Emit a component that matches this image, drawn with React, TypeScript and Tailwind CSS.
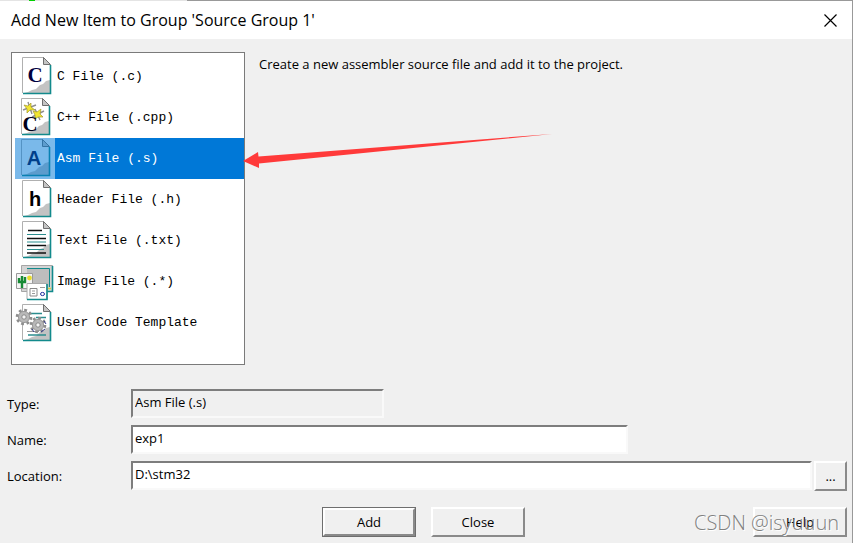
import React, { FC, ReactNode, useState } from 'react'

type PageProps = {
  children?: ReactNode
}

type FileType = {
  label: string
  icon: ReactNode
}

// Sheet of paper with a folded corner, shared by most of the file icons
const Page: FC<PageProps> = ({ children }) => (
  <g>
    <path d="M7.5 1.5H29L35.5 9V37.5H7.5Z" fill="#fff" />
    <path d="M35 24L31 25L28 28L25 29L21 33L17 34L13 36L9 37H35Z" fill="#c3c3c3" />
    <path d="M7.5 37V1.5H29" fill="none" stroke="#b0b0b0" />
    <path d="M28.5 1.5V8.5H35.5Z" fill="#c4c4c4" stroke="#6f6f6f" />
    <path d="M35.5 9V37.5H8" fill="none" stroke="#128a8c" strokeWidth="1.6" />
    {children}
  </g>
)

// Toothed wheel of the template icon
const Gear: FC<{ x: number; y: number }> = ({ x, y }) => (
  <g transform={`translate(${x} ${y})`}>
    <circle r="6.8" fill="none" stroke="#8d8d8d" strokeWidth="3" strokeDasharray="2.7 2.64" />
    <circle r="5.6" fill="#b8b8b8" stroke="#999" />
    <circle r="2.2" fill="#f4f4f4" stroke="#8a8a8a" />
  </g>
)

const fileTypes: FileType[] = [
  {
    label: 'C File (.c)',
    icon: (
      <Page>
        <text x="20" y="26" textAnchor="middle" className="font-['Liberation_Serif',serif] text-[21px] font-bold" fill="#000040">
          C
        </text>
      </Page>
    )
  },
  {
    label: 'C++ File (.cpp)',
    icon: (
      <g>
        <g transform="translate(-1 0)">
          <Page />
        </g>
        <path d="M13 5L17 17M8 13L21 8M20 12L25 23M17 20L29 14" stroke="#8f8f8f" strokeWidth="1.4" />
        <path d="M9 8L13 9L16 6L16 10L20 13L15 13L12 16L12 12Z" fill="#f2e530" stroke="#a39a2c" strokeWidth="0.7" />
        <path d="M18 14L22 15L26 12L25 17L28 20L23 20L20 22L20 18Z" fill="#f2e530" stroke="#a39a2c" strokeWidth="0.7" />
        <text x="15" y="34" textAnchor="middle" className="font-['Liberation_Serif',serif] text-[21px] font-bold" fill="#000018">
          C
        </text>
      </g>
    )
  },
  {
    label: 'Asm File (.s)',
    icon: (
      <g>
        <g transform="translate(-1 0)">
          <Page />
        </g>
        <text x="19" y="27" textAnchor="middle" className="font-['Liberation_Sans',sans-serif] text-[20px] font-bold" fill="#000038">
          A
        </text>
      </g>
    )
  },
  {
    label: 'Header File (.h)',
    icon: (
      <Page>
        <text x="20" y="27" textAnchor="middle" className="font-['Liberation_Sans',sans-serif] text-[20px] font-bold" fill="#000">
          h
        </text>
      </Page>
    )
  },
  {
    label: 'Text File (.txt)',
    icon: (
      <Page>
        <path d="M13 10.5H27M12 18.5H31M12 25.5H31M12 33H31" stroke="#111" strokeWidth="1.3" />
        <path d="M12 14.5H31M12 22H31M12 29.5H29" stroke="#2b8d8e" strokeWidth="1.2" />
      </Page>
    )
  },
  {
    label: 'Image File (.*)',
    icon: (
      <g>
        <path d="M6.5 4.5H37.5V30.5H6.5Z" fill="#d4d4d4" stroke="#a5a5a5" />
        <path d="M12 7.5H34.5V26H12Z" fill="#bdbdbd" />
        <path d="M12 7.5H34.5V26" fill="none" stroke="#128a8c" />
        <path d="M37.5 5V30.5H32" fill="none" stroke="#128a8c" strokeWidth="1.6" />
        <path d="M33 27.5H36" stroke="#d9cf3b" strokeWidth="1.5" />
        <path d="M1.5 12.5H17.5V27.5H1.5Z" fill="#f4f4f4" stroke="#999" />
        <path d="M7 27V15M4 17V21H10V16" fill="none" stroke="#178a35" strokeWidth="2.4" />
        <circle cx="14.5" cy="17" r="2.4" fill="#e8dc2c" />
        <path d="M12 22.5H32V38.5H12Z" fill="#fff" stroke="#aaa" />
        <path d="M32 23V38.5H12" fill="none" stroke="#128a8c" strokeWidth="1.6" />
        <path d="M15 27.5H22V35H15Z" fill="#fff" stroke="#888" />
        <path d="M17 30H20M17 32.5H20M25 26.5H30" stroke="#999" />
        <ellipse cx="27.5" cy="33" rx="2" ry="1.6" fill="#fff" stroke="#2430a0" />
      </g>
    )
  },
  {
    label: 'User Code Template',
    icon: (
      <g transform="translate(0 1)">
        <Page>
          <path d="M14 10.5H27M21 14.5H31M13 32H31" stroke="#2b8d8e" strokeWidth="1.3" />
          <path d="M12 28.5H24" stroke="#999" />
        </Page>
        <Gear x={9} y={14} />
        <Gear x={23} y={22} />
        <path d="M17 26L19 29M26 29L30 26M29 18L31 21" stroke="#343a8c" />
      </g>
    )
  }
]

const sunken =
  'h-[29px] border-2 border-t-[#7d7d7d] border-l-[#7d7d7d] border-r-[#f9f9f9] border-b-[#f9f9f9] px-0.5 pb-1 text-black outline-none'

const raised =
  'h-[30px] border-2 border-t-white border-l-white border-r-[#8a8a8a] border-b-[#8a8a8a] bg-[#f0f0f0] text-black'

const App: FC = () => {
  const [selected, setSelected] = useState('Asm File (.s)')
  const [name, setName] = useState('exp1')
  const [location, setLocation] = useState('D:\\stm32')

  return (
    <div className="flex min-h-screen flex-col overflow-hidden bg-[#f0f0f0] font-['Open_Sans',sans-serif] text-[13px] leading-5 text-black">
      {/* Edge of the window behind */}
      <div className="flex h-px">
        <span className="w-[29px] bg-[#e4e4e4]" />
        <span className="w-1.5 bg-[#00d000]" />
        <span className="w-[152px] bg-[#e4e4e4]" />
        <span className="flex-1 bg-[#999]" />
      </div>

      <div className="flex flex-1 flex-col border-r border-[#999]">
        {/* Title Bar */}
        <header className="flex h-[38px] items-center justify-between bg-white pr-[15px] pl-[11px] text-[16px]">
          <h1>Add New Item to Group &apos;Source Group 1&apos;</h1>
          <button type="button" aria-label="Close window">
            <svg width="13" height="13" viewBox="0 0 13 13" fill="none" stroke="#000" strokeWidth="1.2">
              <path d="M0.5 0.5L12.5 12.5M12.5 0.5L0.5 12.5" />
            </svg>
          </button>
        </header>

        {/* File Types */}
        <main className="flex gap-[14px] pt-[13px] pl-[11px]">
          <div className="relative">
            <ul className="h-[313px] w-[234px] border border-[#7a7a7a] bg-white pt-[3px] pl-[3px]">
              {fileTypes.map(({ label, icon }) => (
                <li key={label}>
                  <button
                    type="button"
                    aria-pressed={selected === label}
                    onClick={() => setSelected(label)}
                    className="flex h-[41px] w-full items-center text-left font-['Liberation_Mono',monospace]"
                  >
                    <svg width="40" height="41" viewBox="0 0 40 41" className="shrink-0">
                      {icon}
                      {selected === label && <rect width="40" height="41" fill="#0078d7" opacity="0.52" />}
                    </svg>
                    <span
                      className={
                        selected === label
                          ? 'flex h-full flex-1 items-center bg-[#0078d7] pl-0.5 text-white'
                          : 'flex-1 pl-0.5'
                      }
                    >
                      {label}
                    </span>
                  </button>
                </li>
              ))}
            </ul>
            <svg
              width="310"
              height="36"
              viewBox="0 0 310 36"
              className="pointer-events-none absolute top-[81px] left-[232px]"
            >
              <path d="M0 28L15 19L15.5 23.5L309 1L16 30.5L16 35Z" fill="#ff3a3a" />
            </svg>
          </div>
          <p className="pt-0.5">Create a new assembler source file and add it to the project.</p>
        </main>

        <form onSubmit={(e) => e.preventDefault()} className="pt-6 pr-[5px]">
          <div className="grid grid-cols-[124px_1fr] items-center gap-y-[7px] pl-[7px]">
            {/* Type */}
            <label htmlFor="type">Type:</label>
            <input id="type" readOnly value={selected} className={`${sunken} w-[253px] bg-[#f0f0f0]`} />

            {/* Name */}
            <label htmlFor="name">Name:</label>
            <input
              id="name"
              value={name}
              onChange={(e) => setName(e.target.value)}
              className={`${sunken} w-[497px] bg-white`}
            />

            {/* Location */}
            <label htmlFor="location">Location:</label>
            <div className="flex gap-0.5">
              <input
                id="location"
                value={location}
                onChange={(e) => setLocation(e.target.value)}
                className={`${sunken} min-w-0 flex-1 bg-white`}
              />
              <button type="button" aria-label="Browse" className={`${raised} w-[33px]`}>
                ...
              </button>
            </div>
          </div>

          {/* Actions */}
          <div className="relative grid grid-cols-[1fr_auto_1fr] pt-4">
            <div className="col-start-2 flex gap-[15px]">
              <button type="submit" className="h-[30px] w-[94px] border border-[#6e6e6e] bg-[#f0f0f0]">
                <span className="flex h-full items-center justify-center border-2 border-t-white border-r-[#8a8a8a] border-b-[#8a8a8a] border-l-white">
                  Add
                </span>
              </button>
              <button type="button" className={`${raised} w-[94px]`}>
                Close
              </button>
            </div>
            <button type="button" className={`${raised} w-[94px] justify-self-end`}>
              Help
            </button>
            <span className="pointer-events-none absolute right-2 bottom-1 text-[20px] font-light text-[#808080] [text-shadow:1px_1px_0_#fff]">
              CSDN @isyuuun
            </span>
          </div>
        </form>
      </div>
    </div>
  )
}

export default App
